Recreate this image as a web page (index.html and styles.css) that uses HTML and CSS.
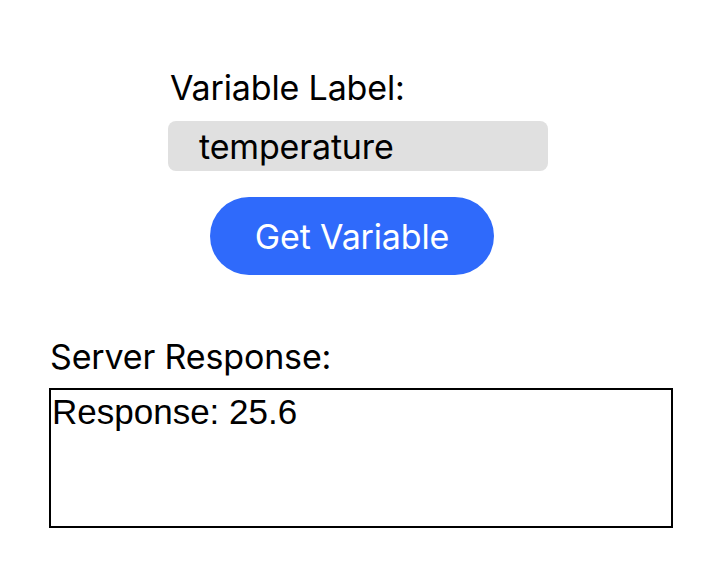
FILE: index.html
```html
<!DOCTYPE html>
<html>
<head>
<meta charset="utf-8">
<link rel="stylesheet" href="styles.css">
</head>
<body>
<main class="page">
  <section class="form">
    <label class="label" for="var">Variable Label:</label>
    <div class="input" id="var">temperature</div>
    <button class="btn">Get Variable</button>
  </section>
  <section class="response">
    <div class="label">Server Response:</div>
    <div class="box">Response: 25.6</div>
  </section>
</main>
</body>
</html>
```

FILE: styles.css
```css
* { box-sizing: border-box; }
html, body { margin: 0; padding: 0; background: #fff; }
body {
  font-family: Inter, "Noto Sans", sans-serif;
  color: #000;
  width: 708px;
  height: 578px;
  overflow: hidden;
}
.page {
  padding-top: 68px;
}
.form {
  display: flex;
  flex-direction: column;
  align-items: flex-start;
  margin-left: 168px;
  width: 380px;
}
.label {
  font-size: 34px;
  line-height: 40px;
  margin-left: 2px;
  letter-spacing: -0.15px;
}
.input {
  margin-top: 13px;
  width: 380px;
  height: 50px;
  background: #e0e0e0;
  border-radius: 8px;
  font-size: 34px;
  line-height: 51px;
  padding-left: 31px;
  letter-spacing: -0.15px;
}
.btn {
  margin-top: 26px;
  margin-left: 42px;
  width: 284px;
  height: 78px;
  border: none;
  border-radius: 39px;
  background: #2f6afb;
  color: #fff;
  font-family: inherit;
  font-size: 34px;
  letter-spacing: -0.15px;
  padding: 0;
}
.response {
  margin-top: 62px;
  margin-left: 49px;
  width: 624px;
}
.response .label {
  margin-left: 1px;
}
.box {
  margin-top: 11px;
  height: 140px;
  border: 2px solid #000;
  font-family: "Liberation Sans", Arial, sans-serif;
  font-size: 35px;
  line-height: 40px;
  padding-left: 1px;
  padding-top: 2px;
}
```
